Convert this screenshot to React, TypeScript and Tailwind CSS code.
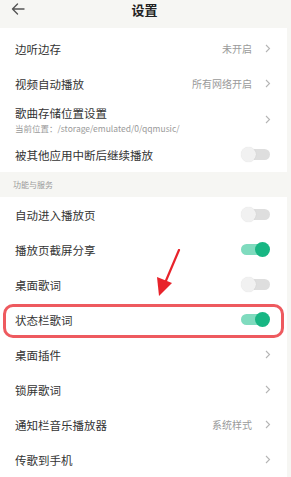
import React from "react";

const font = { fontFamily: '"Noto Sans CJK SC", "Noto Sans", sans-serif' };

function Chevron() {
  return (
    <svg width="6" height="9" viewBox="0 0 6 9" className="ml-[13px]">
      <polyline points="1,1 4.5,4.5 1,8" fill="none" stroke="#b5b5b5" strokeWidth="1.1" />
    </svg>
  );
}

function Toggle({ on }: { on: boolean }) {
  return on ? (
    <div className="relative w-[29px] h-[13px] mr-[1px]">
      <div className="absolute left-0 top-[1px] w-[26px] h-[11px] rounded-full bg-[#7fdbbe]" />
      <div className="absolute right-0 top-[-1px] w-[15px] h-[15px] rounded-full bg-[#18b683]" />
    </div>
  ) : (
    <div className="relative w-[29px] h-[13px] mr-[1px]">
      <div className="absolute right-0 top-[1px] w-[26px] h-[11px] rounded-full bg-[#dedede]" />
      <div className="absolute left-0 top-[-1px] w-[15px] h-[15px] rounded-full bg-[#f1f1f1] shadow-[0_0_1px_rgba(0,0,0,0.15)]" />
    </div>
  );
}

function Row({
  title,
  value,
  toggle,
  sub,
  h = "h-[35px]",
  children,
}: {
  title: string;
  value?: string;
  toggle?: boolean;
  sub?: string;
  h?: string;
  children?: React.ReactNode;
}) {
  return (
    <div className={`relative flex items-center ${h} pl-[15px] pr-[16px]`}>
      <div className="flex-1 min-w-0">
        <div className="text-[11.5px] leading-[16px] text-[#333]">{title}</div>
        {sub && <div className="text-[8.5px] leading-[11px] text-[#9a9a9a] mt-[2px] whitespace-nowrap">{sub}</div>}
      </div>
      {value && <span className="text-[10px] text-[#9a9a9a]">{value}</span>}
      {toggle === undefined ? <Chevron /> : <Toggle on={toggle} />}
      {children}
    </div>
  );
}

export default function App() {
  return (
    <div className="w-[291px] h-[477px] overflow-hidden bg-[#f6f6f3]" style={font}>
      <div className="relative h-[28px] flex items-center justify-center">
        <svg width="14" height="12" viewBox="0 0 14 12" className="absolute left-[11px] top-[3px]">
          <path d="M13 6H1.5M6.5 1L1.5 6l5 5" fill="none" stroke="#555" strokeWidth="1.4" strokeLinecap="round" strokeLinejoin="round" />
        </svg>
        <span className="text-[13px] font-bold text-[#222] -mt-[9px] ml-[-2px]">设置</span>
      </div>
      <div className="bg-white mr-[4px] pt-[3px]">
        <Row title="边听边存" value="未开启" />
        <Row title="视频自动播放" value="所有网络开启" />
        <Row title="歌曲存储位置设置" sub="当前位置：/storage/emulated/0/qqmusic/" h="h-[36px]" />
        <Row title="被其他应用中断后继续播放" toggle={false} />
      </div>
      <div className="h-[25px] flex items-center pl-[13px] text-[8px] text-[#9a9a9a] mr-[4px]">功能与服务</div>
      <div className="relative bg-white mr-[4px]">
        <Row title="自动进入播放页" toggle={false} />
        <Row title="播放页截屏分享" toggle={true} />
        <Row title="桌面歌词" toggle={false} />
        <Row title="状态栏歌词" toggle={true}>
          <div className="absolute left-[3px] right-[3px] top-[2px] bottom-[-1px] rounded-[10px] border-[3px] border-[#ee5a5f]" />
        </Row>
        <Row title="桌面插件" />
        <Row title="锁屏歌词" />
        <Row title="通知栏音乐播放器" value="系统样式" />
        <Row title="传歌到手机" />
        <svg width="40" height="56" viewBox="0 0 40 56" className="absolute left-[150px] top-[52px]">
          <line x1="29" y1="1" x2="15" y2="34" stroke="#e8232b" strokeWidth="2.2" strokeLinecap="round" />
          <polygon points="7,28 22,34 9,47" fill="#e8232b" />
        </svg>
      </div>
    </div>
  );
}
